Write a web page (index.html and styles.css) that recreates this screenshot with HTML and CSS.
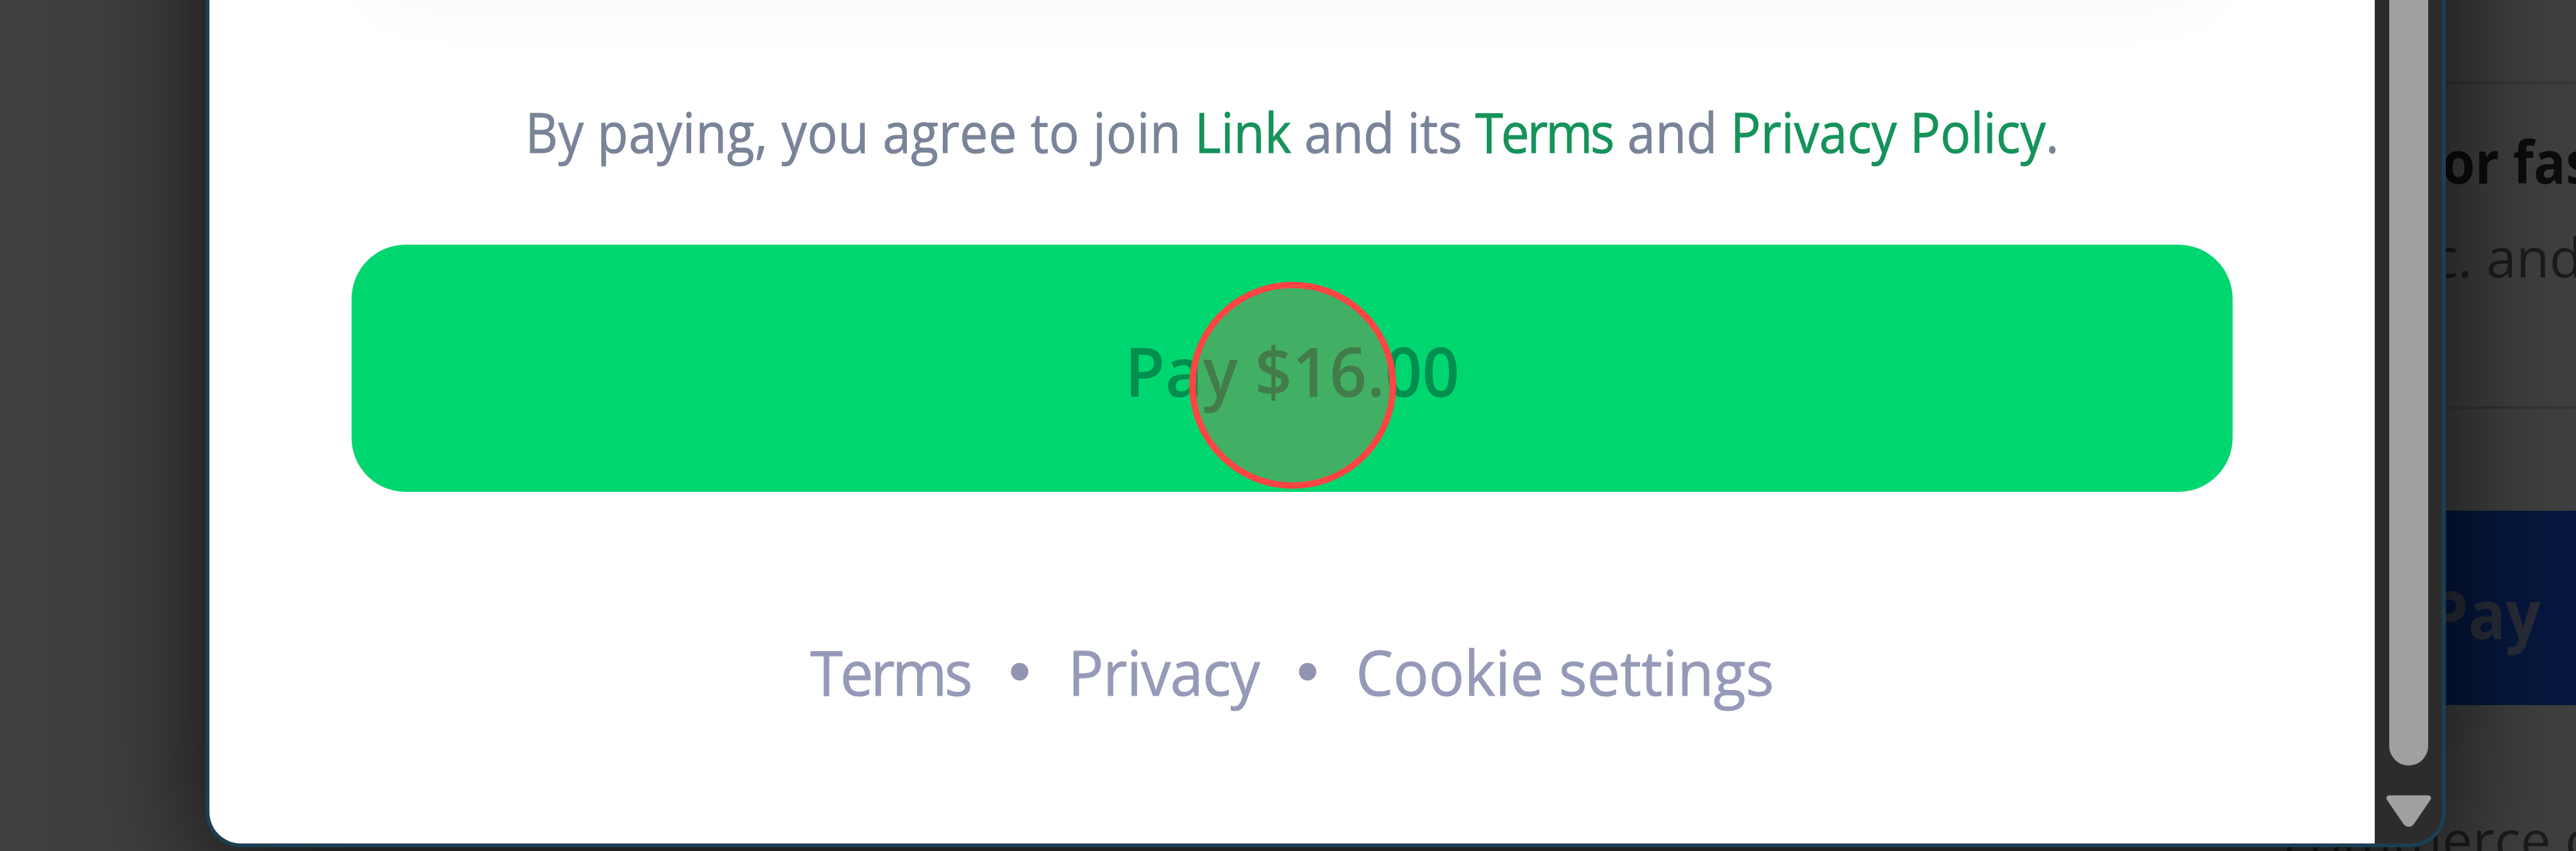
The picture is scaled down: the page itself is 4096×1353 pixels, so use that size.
FILE: index.html
```
<!DOCTYPE html>
<html lang="en">
<head>
    <meta charset="UTF-8">
    <title>Checkout</title>
    <link rel="stylesheet" href="styles.css">
</head>
<body>
    <main class="backdrop">
        <section class="page">
            <div class="fast-box">
                <h2 class="fast-title">or fas</h2>
                <p class="fast-text">c. and</p>
            </div>
            <div class="page-pay"><span class="page-pay-label">Pay</span></div>
            <p class="page-note">commerce c</p>
        </section>

        <section class="window">
            <div class="content">
                <div class="card-shadow"></div>
                <p class="agree"><span class="intro">By paying, you agree to join </span><a>Link</a> and its <a class="tight">Terms</a> and <a>Privacy Policy</a>.</p>
                <button class="pay-btn"><span class="pay-label">Pay $16.00</span><span class="click-mark"></span></button>
                <footer class="links">
                    <a class="tight">Terms</a>
                    <i class="dot"></i>
                    <a class="privacy">Privacy</a>
                    <i class="dot"></i>
                    <a>Cookie settings</a>
                </footer>
            </div>
            <div class="scrollbar">
                <div class="thumb"></div>
                <svg class="arrow" width="84" height="60" viewBox="0 0 84 60">
                    <path d="M11 9H73L47 47Q42 53 37 47Z" fill="#a0a0a0" stroke="#a0a0a0" stroke-width="9" stroke-linejoin="round"/>
                </svg>
            </div>
        </section>
    </main>
</body>
</html>
```
FILE: styles.css
```
* {
    box-sizing: border-box;
}
body {
    margin: 0;
    font-family: "Open Sans", sans-serif;
}
h2, p {
    margin: 0;
    font-weight: 400;
    white-space: nowrap;
}
.backdrop {
    position: relative;
    width: 4096px;
    height: 1353px;
    overflow: hidden;
    background: #404040;
}
/* page behind the popup */
.page {
    display: flow-root;
    padding-left: 3889px;
}
.fast-box {
    height: 520px;
    margin-top: 130px;
    border-top: 4px solid #363636;
    border-bottom: 4px solid #363636;
}
.fast-title {
    margin-left: -6px;
    padding-top: 57px;
    font-size: 94px;
    line-height: 130px;
    font-weight: 700;
    color: #0c0c0c;
    transform: scaleX(0.9);
    transform-origin: left;
}
.fast-text {
    margin-left: -22px;
    padding-top: 27px;
    font-size: 86px;
    line-height: 120px;
    color: #1c1c1c;
}
.page-pay {
    height: 309px;
    margin-top: 162px;
    font-size: 108px;
    line-height: 326px;
    font-weight: 700;
    color: #2a2e3a;
    background: #06183e;
}
.page-pay-label {
    display: inline-block;
    margin-left: -26px;
    transform: scaleX(0.91);
    transform-origin: left;
}
.page-note {
    margin-top: 153px;
    margin-left: -258px;
    font-size: 86px;
    line-height: 120px;
    color: #1c1c1c;
}
/* popup window */
.window {
    position: absolute;
    left: 327px;
    top: -300px;
    width: 3562px;
    height: 1647px;
    display: flex;
    border: 6px solid #1b4054;
    border-radius: 0 0 56px 56px;
    background: #2c2c2c;
    box-shadow: 0 50px 210px rgba(0, 0, 0, 0.75);
    overflow: hidden;
}
.content {
    width: 3443px;
    padding-top: 94px;
    background: #fff;
}
.card-shadow {
    height: 200px;
    margin: 0 262px;
    border-radius: 40px;
    box-shadow: 0 0 120px rgba(0, 0, 0, 0.035);
}
.agree {
    padding-top: 144px;
    text-align: center;
    font-size: 88px;
    line-height: 130px;
    color: #7a8499;
    -webkit-text-stroke: 1px;
    transform: scaleX(0.912);
}
.agree a {
    color: #15935a;
}
.intro {
    letter-spacing: 0.6px;
}
.tight {
    letter-spacing: -3.6px;
}
.agree .tight {
    margin-right: 3px;
}
.pay-btn {
    position: relative;
    display: block;
    width: 2991px;
    height: 393px;
    margin: 115px 0 0 226px;
    padding: 0;
    border: none;
    border-radius: 86px;
    background: #00d66f;
    font: 600 108px/401px "Open Sans", sans-serif;
    color: #008f4e;
}
.pay-label {
    display: inline-block;
    transform: scaleX(0.962);
}
.click-mark {
    position: absolute;
    left: 1332px;
    top: 59px;
    width: 329px;
    height: 329px;
    border: 10px solid #ff4444;
    border-radius: 50%;
    background: rgba(255, 68, 68, 0.26);
}
.links {
    display: flex;
    align-items: center;
    justify-content: center;
    gap: 66px;
    margin-top: 216px;
    font-size: 99px;
    line-height: 140px;
    color: #969ab8;
    -webkit-text-stroke: 1px;
    transform: scaleX(0.95);
}
.links .tight {
    margin-right: 3px;
    letter-spacing: -4.4px;
}
.privacy {
    letter-spacing: -0.8px;
}
.dot {
    width: 29px;
    height: 28px;
    border-radius: 50%;
    background: #9194b2;
}
.scrollbar {
    width: 107px;
    display: flex;
    flex-direction: column;
    align-items: center;
}
.thumb {
    width: 62px;
    height: 1511px;
    border-radius: 31px;
    background: #a0a0a0;
}
.arrow {
    margin-top: 43px;
}
```
